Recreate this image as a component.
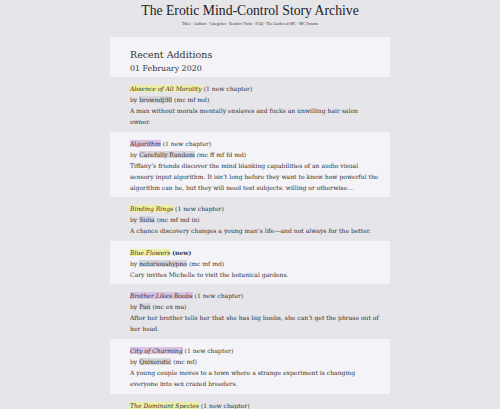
const stories = [
    {
        title: "Absence of All Morality",
        status: "(1 new chapter)",
        tone: "yellow",
        author: "browndj98",
        codes: "(mc mf md)",
        blurb: "A man without morals mentally enslaves and fucks an unwilling hair salon owner.",
    },
    {
        title: "Algorithm",
        status: "(1 new chapter)",
        tone: "purple",
        author: "Carefully Random",
        codes: "(mc ff mf fd md)",
        blurb:
            "Tiffany’s friends discover the mind blanking capabilities of an audio visual sensory input algorithm. It isn’t long before they want to know how powerful the algorithm can be, but they will need test subjects: willing or otherwise…",
    },
    {
        title: "Binding Rings",
        status: "(1 new chapter)",
        tone: "yellow",
        author: "Sidia",
        codes: "(mc mf md in)",
        blurb: "A chance discovery changes a young man’s life—and not always for the better.",
    },
    {
        title: "Blue Flowers",
        status: "(new)",
        tone: "yellow",
        author: "notorioushypno",
        codes: "(mc mf md)",
        blurb: "Cary invites Michelle to visit the botanical gardens.",
    },
    {
        title: "Brother Likes Boobs",
        status: "(1 new chapter)",
        tone: "purple",
        author: "Pan",
        codes: "(mc ex ma)",
        blurb: "After her brother tells her that she has big boobs, she can’t get the phrase out of her head.",
    },
    {
        title: "City of Charming",
        status: "(1 new chapter)",
        tone: "purple",
        author: "Quixerotic",
        codes: "(mc mf)",
        blurb: "A young couple moves to a town where a strange experiment is changing everyone into sex crazed breeders.",
    },
    {
        title: "The Dominant Species",
        status: "(1 new chapter)",
        tone: "yellow",
        author: "",
        codes: "",
        blurb: "",
    },
];

const navLinks = ["Titles", "Authors", "Categories", "Readers’ Picks", "FAQ", "The Garden of MC", "MC Forums"];

export default function App() {
    return (
        <div className="h-[409px] overflow-hidden bg-[#e6e5ea] text-[#333] font-['DejaVu_Serif',serif]">
            <header className="pt-[3px] text-center">
                <h1 className="text-[13.7px] leading-[16px] text-[#222] font-['Liberation_Serif',serif]">
                    The Erotic Mind-Control Story Archive
                </h1>
                <nav className="mt-[2px] text-[3.9px] leading-[6px] text-[#333] font-['Liberation_Serif',serif]">
                    {navLinks.map((link, i) => (
                        <span key={link}>
                            {i > 0 ? " · " : ""}
                            {link}
                        </span>
                    ))}
                </nav>
            </header>

            <main className="mx-auto mt-[10px] w-[280px]">
                <div className="bg-[#f4f4f8] pl-[20px] pr-[11px] pt-[10px] pb-[1px]">
                    <h2 className="text-[9.5px] leading-[15px]">Recent Additions</h2>
                    <h3 className="text-[7.9px] leading-[14px]">01 February 2020</h3>
                </div>

                {stories.map((s, i) => (
                    <div
                        key={s.title}
                        className={`pl-[20px] pr-[11px] pt-[6px] pb-[4.6px] text-[6.05px] leading-[11px] ${i % 2 === 1 ? "bg-[#f4f4f8]" : ""}`}
                    >
                        <p>
                            <span className={`italic ${s.tone === "yellow" ? "bg-[#eef0a6]" : "bg-[#dcc2e2]"}`}>
                                {s.title}
                            </span>{" "}
                            <span className={s.status === "(new)" ? "font-bold" : ""}>{s.status}</span>
                        </p>
                        {s.author ? (
                            <p>
                                by <span className="bg-[#d6d5da]">{s.author}</span> {s.codes}
                            </p>
                        ) : null}
                        {s.blurb ? <p>{s.blurb}</p> : null}
                    </div>
                ))}
            </main>
        </div>
    );
}
